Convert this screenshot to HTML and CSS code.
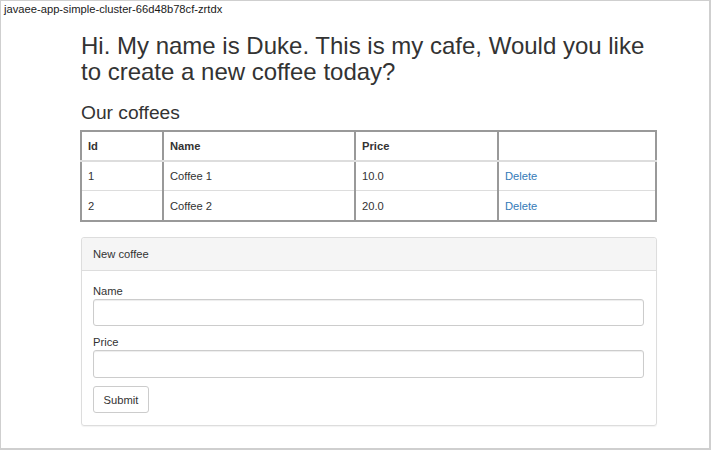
FILE: index.html
```html
<!DOCTYPE html>
<html>
<head>
<meta charset="utf-8">
<title>Cafe</title>
<link rel="stylesheet" href="styles.css">
</head>
<body>
<div class="frame">
  <div class="host">javaee-app-simple-cluster-66d48b78cf-zrtdx</div>
  <div class="container">
    <h1 class="title">Hi. My name is Duke. This is my cafe, Would you like to create a new coffee today?</h1>
    <h3 class="subtitle">Our coffees</h3>
    <table class="coffees">
      <colgroup>
        <col class="c-id"><col class="c-name"><col class="c-price"><col class="c-act">
      </colgroup>
      <thead>
        <tr><th>Id</th><th>Name</th><th>Price</th><th></th></tr>
      </thead>
      <tbody>
        <tr><td>1</td><td>Coffee 1</td><td>10.0</td><td><a class="link" href="#">Delete</a></td></tr>
        <tr><td>2</td><td>Coffee 2</td><td>20.0</td><td><a class="link" href="#">Delete</a></td></tr>
      </tbody>
    </table>
    <div class="panel">
      <div class="panel-heading">New coffee</div>
      <div class="panel-body">
        <div class="form-group">
          <label class="label">Name</label>
          <input class="input" type="text">
        </div>
        <div class="form-group">
          <label class="label">Price</label>
          <input class="input" type="text">
        </div>
        <button class="btn" type="button">Submit</button>
      </div>
    </div>
  </div>
</div>
</body>
</html>
```
FILE: styles.css
```css
html, body {
  margin: 0;
  padding: 0;
  background: #fff;
}
body {
  font-family: "Liberation Sans", Arial, sans-serif;
  font-size: 11.2px;
  line-height: 16px;
  color: #333;
}
.frame {
  box-sizing: border-box;
  width: 711px;
  height: 450px;
  border-style: solid;
  border-color: #cfcfcf;
  border-width: 1px 2px 2px 1px;
  overflow: hidden;
}
.host {
  padding-left: 3px;
  color: #1a1a1a;
}
.container {
  width: 577px;
  margin-left: 79px;
}
.title {
  font-size: 24px;
  line-height: 26.4px;
  font-weight: 500;
  margin: 16px 0 8px 1px;
  color: #333;
}
.subtitle {
  font-size: 19.2px;
  line-height: 21px;
  font-weight: 500;
  margin: 16px 0 7px 1px;
  color: #333;
}
.coffees {
  width: 577px;
  border-collapse: collapse;
  border: 2px solid #999;
  margin-bottom: 15px;
}
.c-id { width: 82px; }
.c-name { width: 192px; }
.c-price { width: 143px; }
.coffees th,
.coffees td {
  height: 30px;
  box-sizing: border-box;
  padding: 0 6px;
  text-align: left;
  vertical-align: middle;
  border-left: 2px solid #999;
  border-right: 2px solid #999;
  border-top: 1px solid #ddd;
}
.coffees th {
  font-weight: bold;
  color: #333;
  border-top: 2px solid #999;
  border-bottom: 2px solid #ddd;
}
.link {
  color: #337ab7;
  text-decoration: none;
}
.panel {
  margin-left: 1px;
  border: 1px solid #ddd;
  border-radius: 3px;
  box-shadow: 0 1px 1px rgba(0,0,0,0.05);
}
.panel-heading {
  padding: 8px 11px;
  background: #f5f5f5;
  border-bottom: 1px solid #ddd;
  border-radius: 3px 3px 0 0;
}
.panel-body {
  padding: 12px 12px 12px 11px;
}
.form-group {
  margin-bottom: 8px;
}
.label {
  display: block;
  height: 16px;
}
.input {
  display: block;
  box-sizing: border-box;
  width: 100%;
  height: 27.5px;
  margin: 0;
  padding: 5px 10px;
  border: 1px solid #ccc;
  border-radius: 3px;
  box-shadow: inset 0 1px 1px rgba(0,0,0,0.075);
  font: inherit;
  background: #fff;
}
.btn {
  display: block;
  box-sizing: border-box;
  height: 27.5px;
  padding: 0 9.6px;
  border: 1px solid #ccc;
  border-radius: 3px;
  background: #fff;
  color: #333;
  font: inherit;
}
```
